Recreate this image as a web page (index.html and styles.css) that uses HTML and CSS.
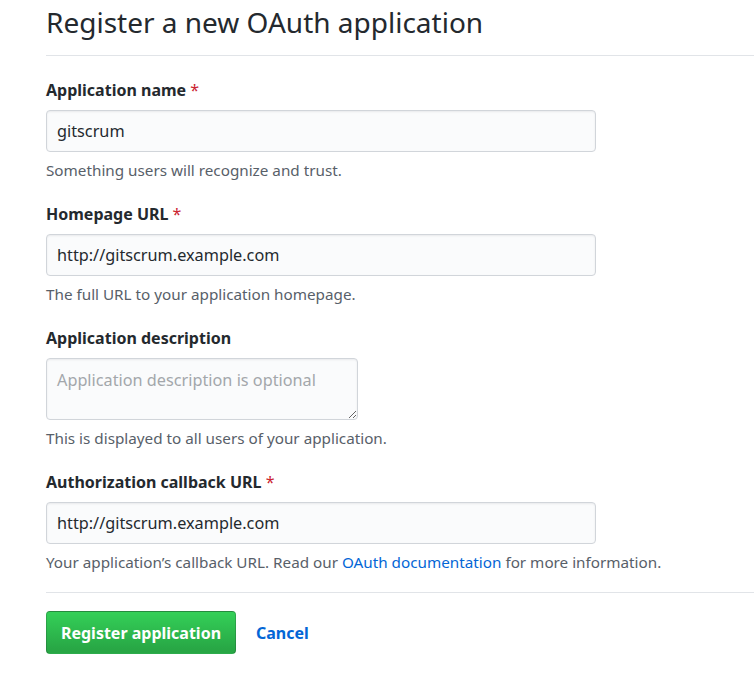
FILE: index.html
```html
<!DOCTYPE html>
<html lang="en">
<head>
<meta charset="utf-8">
<title>Register a new OAuth application</title>
<link rel="stylesheet" href="styles.css">
</head>
<body>
<div class="page">
  <div class="subhead">
    <h2 class="subhead-title">Register a new OAuth application</h2>
  </div>
  <form class="form">
    <div class="form-group">
      <label class="label">Application name <span class="req">*</span></label>
      <input class="input" type="text" value="gitscrum">
      <p class="note">Something users will recognize and trust.</p>
    </div>
    <div class="form-group">
      <label class="label">Homepage URL <span class="req">*</span></label>
      <input class="input" type="text" value="http://gitscrum.example.com">
      <p class="note">The full URL to your application homepage.</p>
    </div>
    <div class="form-group">
      <label class="label">Application description</label>
      <textarea class="textarea" placeholder="Application description is optional"></textarea>
      <p class="note">This is displayed to all users of your application.</p>
    </div>
    <div class="form-group form-group-last">
      <label class="label">Authorization callback URL <span class="req">*</span></label>
      <input class="input" type="text" value="http://gitscrum.example.com">
      <p class="note">Your application’s callback URL. Read our <a class="link" href="#">OAuth documentation</a> for more information.</p>
    </div>
    <div class="actions">
      <button class="btn-primary" type="button">Register application</button>
      <a class="cancel" href="#">Cancel</a>
    </div>
  </form>
</div>
</body>
</html>
```
FILE: styles.css
```css
html, body {
  margin: 0;
  padding: 0;
  background: #ffffff;
}
body {
  font-family: "Noto Sans", "Liberation Sans", sans-serif;
  color: #24292e;
}
.page {
  padding-left: 46px;
}
.subhead {
  border-bottom: 1px solid #e1e4e8;
  padding-bottom: 10px;
}
.subhead-title {
  margin: 0;
  font-size: 28px;
  font-weight: 400;
  line-height: 45px;
}
.form {
  display: flex;
  flex-direction: column;
  padding-top: 22px;
}
.form-group {
  display: flex;
  flex-direction: column;
  align-items: flex-start;
  margin-bottom: 22px;
}
.form-group-last {
  margin-bottom: 20px;
}
.label {
  font-size: 16px;
  font-weight: 700;
  line-height: 25px;
  margin-bottom: 7px;
}
.req {
  color: #cb2431;
  font-weight: 400;
}
.input, .textarea {
  box-sizing: border-box;
  font-family: inherit;
  font-size: 16.25px;
  color: #24292e;
  background: #fafbfc;
  border: 1px solid #d1d5da;
  border-radius: 4px;
  box-shadow: inset 0 1px 2px rgba(27,31,35,0.075);
  padding: 0 10px;
  outline: none;
}
.input {
  width: 550px;
  height: 42px;
}
.textarea {
  width: 312px;
  height: 62px;
  padding-top: 10px;
  line-height: 22px;
  resize: vertical;
}
.textarea::placeholder {
  color: #a3a7ab;
}
.note {
  margin: 8px 0 0;
  font-size: 15.25px;
  line-height: 20px;
  color: #586069;
}
.link {
  color: #0366d6;
  text-decoration: none;
}
.actions {
  display: flex;
  align-items: center;
  gap: 20px;
  border-top: 1px solid #e1e4e8;
  padding-top: 18px;
}
.btn-primary {
  box-sizing: border-box;
  width: 190px;
  height: 43px;
  font-family: inherit;
  font-size: 16px;
  font-weight: 700;
  color: #ffffff;
  background-image: linear-gradient(-180deg, #34d058 0%, #28a745 90%);
  border: 1px solid rgba(27,31,35,0.2);
  border-radius: 4px;
  padding: 0;
  cursor: pointer;
}
.cancel {
  font-size: 16px;
  font-weight: 700;
  color: #0366d6;
  text-decoration: none;
}
```
